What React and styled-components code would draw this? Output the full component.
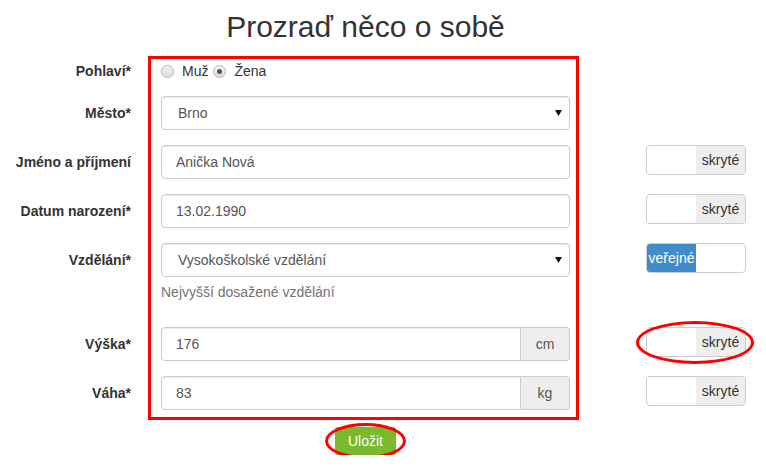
import React from "react";
import styled, { createGlobalStyle, css } from "styled-components";

const GlobalStyle = createGlobalStyle`
  html, body { margin: 0; padding: 0; background: #fff; }
  body {
    font-family: "Liberation Sans", Arial, Helvetica, sans-serif;
    font-size: 14px;
    color: #333;
  }
  * { box-sizing: border-box; }
`;

const FormGrid = styled.div`
  display: grid;
  grid-template-columns: 131px 30px 409px 76px 100px;
  row-gap: 15px;
  padding-top: 10px;
  width: 766px;
`;

const Title = styled.h1`
  grid-column: 3;
  grid-row: 1;
  justify-self: center;
  margin: 0 0 1px;
  font-size: 30px;
  line-height: 33px;
  font-weight: 400;
  color: #333;
  white-space: nowrap;
`;

const Label = styled.label`
  grid-column: 1;
  grid-row: ${(p) => p.$row};
  align-self: start;
  text-align: right;
  font-weight: bold;
  font-size: 14px;
  height: ${(p) => p.$h || 34}px;
  line-height: ${(p) => p.$lh || 34}px;
  white-space: nowrap;
  color: #333;
`;

const Cell = styled.div`
  grid-column: 3;
  grid-row: ${(p) => p.$row};
  align-self: start;
  min-width: 0;
`;

const SideCell = styled.div`
  grid-column: 5;
  grid-row: ${(p) => p.$row};
  align-self: start;
  position: relative;
  ${(p) =>
    p.$circled &&
    css`
      &::after {
        content: "";
        position: absolute;
        top: -6px;
        bottom: -7px;
        left: -10px;
        right: -8px;
        border: 3.5px solid #f00;
        border-radius: 50%;
        pointer-events: none;
      }
    `}
`;

const Highlight = styled.div`
  grid-column: 3;
  grid-row: 2 / 9;
  margin: -3px -9px -10px -13px;
  border: 3px solid #f00;
  pointer-events: none;
  z-index: 2;
`;

const RadioRow = styled.div`
  display: flex;
  align-items: center;
  height: 22px;
  padding-top: 2px;
`;

const RadioOption = styled.span`
  display: inline-flex;
  align-items: center;
  gap: 8px;
  margin-right: 5px;
  font-size: 14px;
  color: #333;
`;

const RadioDot = styled.span`
  position: relative;
  width: 13px;
  height: 13px;
  border-radius: 50%;
  border: 1px solid #b5b5b5;
  background: linear-gradient(#f4f4f4, #dcdcdc);
  ${(p) =>
    p.$checked &&
    css`
      &::after {
        content: "";
        position: absolute;
        left: 3px;
        top: 3px;
        width: 5px;
        height: 5px;
        border-radius: 50%;
        background: #555;
      }
    `}
`;

const fieldBase = css`
  height: 34px;
  border: 1px solid #ccc;
  border-radius: 4px;
  box-shadow: inset 0 1px 1px rgba(0, 0, 0, 0.075);
  background: #fff;
  font-family: "Liberation Sans", Arial, sans-serif;
  font-size: 14px;
  color: #555;
`;

const TextInput = styled.input`
  ${fieldBase};
  display: block;
  width: 100%;
  padding: 0 14px;
  outline: none;
  ${(p) =>
    p.$grouped &&
    css`
      flex: 1;
      width: auto;
      min-width: 0;
      border-top-right-radius: 0;
      border-bottom-right-radius: 0;
    `}
`;

const Select = styled.div`
  ${fieldBase};
  display: flex;
  align-items: center;
  justify-content: space-between;
  padding: 0 7px 0 16px;
`;

const HelpText = styled.p`
  margin: 5px 0 10px;
  line-height: 20px;
  font-size: 14px;
  color: #737373;
`;

const InputGroup = styled.div`
  display: flex;
`;

const Addon = styled.span`
  width: 49px;
  height: 34px;
  display: flex;
  align-items: center;
  justify-content: center;
  background: #eee;
  border: 1px solid #ccc;
  border-left: 0;
  border-radius: 0 4px 4px 0;
  color: #555;
  font-size: 14px;
`;

const Toggle = styled.div`
  display: flex;
  width: 100px;
  height: 30px;
  border: 1px solid #ccc;
  border-radius: 4px;
  overflow: hidden;
  background: #fff;
`;

const ToggleHalf = styled.span`
  flex: 1;
  display: flex;
  align-items: center;
  justify-content: center;
  font-size: 14px;
  line-height: 28px;
  white-space: nowrap;
  ${(p) =>
    p.$tone === "hidden" &&
    css`
      background: #eee;
      color: #333;
    `}
  ${(p) =>
    p.$tone === "public" &&
    css`
      background: #428bca;
      color: #fff;
    `}
`;

const ButtonCell = styled.div`
  grid-column: 3;
  grid-row: 9;
  justify-self: center;
  position: relative;
  margin-top: 2px;
  &::after {
    content: "";
    position: absolute;
    top: -4px;
    bottom: -4px;
    left: -10px;
    right: -10px;
    border: 3.5px solid #f00;
    border-radius: 50%;
    pointer-events: none;
  }
`;

const SaveButton = styled.button`
  width: 61px;
  height: 28px;
  border: 0;
  border-radius: 3px;
  background: #7ab92b;
  color: #fff;
  font-family: "Liberation Sans", Arial, sans-serif;
  font-size: 14px;
  padding: 0;
  cursor: pointer;
`;

const Caret = () => (
  <svg width="7" height="6" viewBox="0 0 7 6">
    <path d="M0 0 L7 0 L3.5 6 Z" fill="#111" />
  </svg>
);

const Privacy = ({ row, isPublic, circled }) => (
  <SideCell $row={row} $circled={circled}>
    <Toggle>
      {isPublic ? (
        <>
          <ToggleHalf $tone="public">veřejné</ToggleHalf>
          <ToggleHalf />
        </>
      ) : (
        <>
          <ToggleHalf />
          <ToggleHalf $tone="hidden">skryté</ToggleHalf>
        </>
      )}
    </Toggle>
  </SideCell>
);

export default function App() {
  return (
    <>
      <GlobalStyle />
      <FormGrid>
        <Title>Prozraď něco o sobě</Title>

        <Label $row={2} $h={22} $lh={24}>Pohlaví*</Label>
        <Cell $row={2}>
          <RadioRow>
            <RadioOption>
              <RadioDot />
              Muž
            </RadioOption>
            <RadioOption>
              <RadioDot $checked />
              Žena
            </RadioOption>
          </RadioRow>
        </Cell>

        <Label $row={3}>Město*</Label>
        <Cell $row={3}>
          <Select>
            <span>Brno</span>
            <Caret />
          </Select>
        </Cell>

        <Label $row={4}>Jméno a příjmení</Label>
        <Cell $row={4}>
          <TextInput readOnly defaultValue="Anička Nová" />
        </Cell>
        <Privacy row={4} />

        <Label $row={5}>Datum narození*</Label>
        <Cell $row={5}>
          <TextInput readOnly defaultValue="13.02.1990" />
        </Cell>
        <Privacy row={5} />

        <Label $row={6}>Vzdělání*</Label>
        <Cell $row={6}>
          <Select>
            <span>Vysokoškolské vzdělání</span>
            <Caret />
          </Select>
          <HelpText>Nejvyšší dosažené vzdělání</HelpText>
        </Cell>
        <Privacy row={6} isPublic />

        <Label $row={7}>Výška*</Label>
        <Cell $row={7}>
          <InputGroup>
            <TextInput $grouped readOnly defaultValue="176" />
            <Addon>cm</Addon>
          </InputGroup>
        </Cell>
        <Privacy row={7} circled />

        <Label $row={8}>Váha*</Label>
        <Cell $row={8}>
          <InputGroup>
            <TextInput $grouped readOnly defaultValue="83" />
            <Addon>kg</Addon>
          </InputGroup>
        </Cell>
        <Privacy row={8} />

        <Highlight />

        <ButtonCell>
          <SaveButton type="button">Uložit</SaveButton>
        </ButtonCell>
      </FormGrid>
    </>
  );
}
